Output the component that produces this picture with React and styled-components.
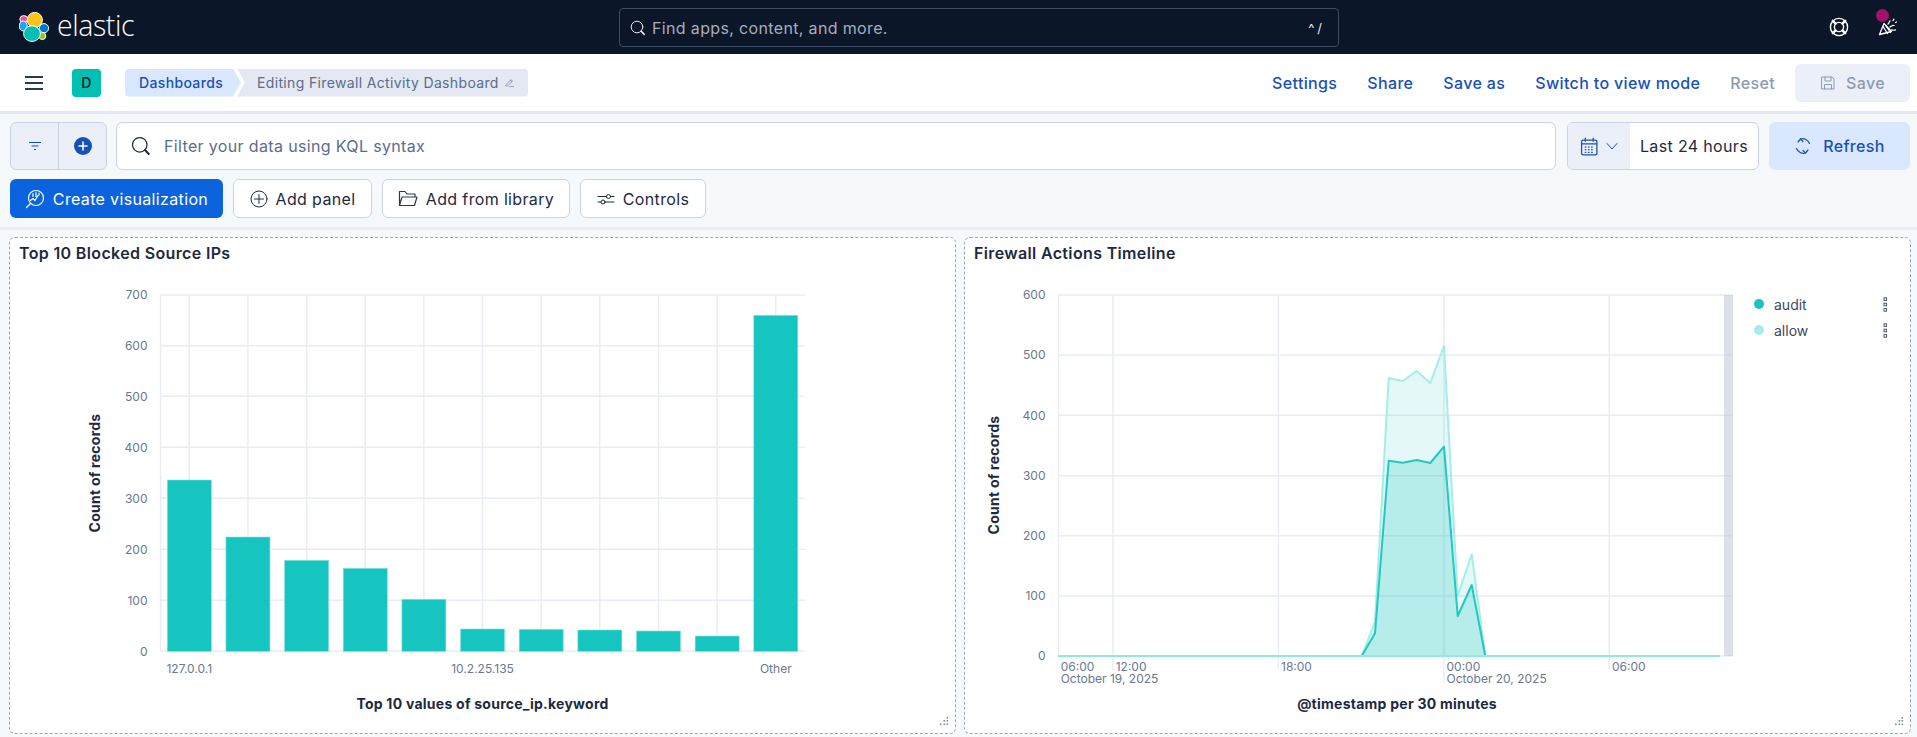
import React from 'react';
import styled, { createGlobalStyle } from 'styled-components';

const Global = createGlobalStyle`
  html, body { margin: 0; padding: 0; height: 100%; }
  body { background: #f6f9fc; font-family: Inter, "Liberation Sans", sans-serif; letter-spacing: 0.35px; overflow: hidden; }
  * { box-sizing: border-box; }
`;

const Page = styled.div`width: 1917px; height: 737px; display: flex; flex-direction: column;`;

const TopBar = styled.header`
  height: 54px; background: #0b1628; display: flex; align-items: center; padding-right: 19px;
`;
const Brand = styled.div`width: 619px; padding-left: 19px; display: flex; align-items: center; gap: 8px;`;
const Wordmark = styled.span`
  color: #fff; font-family: "Open Sans", sans-serif; font-weight: 300; font-size: 28.5px; line-height: 1; letter-spacing: -0.4px; margin-top: -3px;
`;
const GlobalSearch = styled.div`
  width: 720px; height: 39px; margin-top: 1px; border: 1px solid #3e4c66; border-radius: 4px; display: flex; align-items: center;
  padding: 0 13px 0 10px; gap: 6px; color: #a6afbd; font-size: 16px;
`;
const SearchHint = styled.span`flex: 1;`;
const Shortcut = styled.span`color: #e4e8ee; font-size: 13px; letter-spacing: 3px;`;
const TopIcons = styled.div`flex: 1; display: flex; justify-content: flex-end; align-items: center; gap: 29px;`;
const Party = styled.div`position: relative; width: 20px; height: 20px;`;
const Badge = styled.span`
  position: absolute; left: -2px; top: -8px; width: 13px; height: 13px; border-radius: 50%; background: #a3126a;
`;

const SubBar = styled.div`
  height: 60px; background: #fff; border-bottom: 3px solid #e3e8f2; display: flex; align-items: center; padding: 0 7px 0 24px;
`;
const Avatar = styled.div`
  width: 29px; height: 28px; margin-left: 28px; border-radius: 4px; background: #00bfb3; color: #07101f;
  display: flex; align-items: center; justify-content: center; font-size: 14px; font-weight: 500;
`;
const Crumbs = styled.nav`display: flex; margin-left: 24px; height: 28px;`;
const CrumbLink = styled.span`
  background: #d9e8ff; color: #1750ba; font-size: 14px; font-weight: 500; display: flex; align-items: center;
  padding: 0 20px 0 14px; width: 116px; border-radius: 4px 0 0 4px;
  clip-path: polygon(0 0, calc(100% - 8px) 0, 100% 50%, calc(100% - 8px) 100%, 0 100%);
`;
const CrumbCurrent = styled.span`
  background: #e3e8f2; color: #5a6d8c; font-size: 14px; display: flex; align-items: center; gap: 6px; margin-left: -4px;
  padding: 0 14px 0 20px; width: 291px; border-radius: 0 4px 4px 0; white-space: nowrap;
  clip-path: polygon(0 0, 100% 0, 100% 100%, 0 100%, 8px 50%);
`;
const MenuLinks = styled.div`margin-left: auto; display: flex; align-items: center; gap: 30px;`;
const MenuLink = styled.span`
  font-size: 16px; font-weight: 500; color: ${p => (p.$off ? '#8c9ab3' : '#1750ba')}; white-space: nowrap;
`;
const SaveButton = styled.div`
  width: 115px; height: 38px; margin-left: -10px; border-radius: 6px; background: #ebf0f8; color: #8c9ab3; display: flex; align-items: center; justify-content: center;
  gap: 10px; font-size: 16px; font-weight: 500;
`;

const QuerySection = styled.section`
  height: 116px; border-bottom: 3px solid #e9edf4; padding: 8px 7px 0 10px; display: flex; flex-direction: column; gap: 9px;
`;
const QueryRow = styled.div`display: flex; height: 48px;`;
const FilterGroup = styled.div`
  width: 97px; background: #ebf0f8; border: 1px solid #cad3e2; border-radius: 6px; display: flex;
`;
const FilterCell = styled.div`
  flex: ${p => (p.$first ? '0 0 48px' : 1)}; display: flex; align-items: center; justify-content: center;
  ${p => p.$first && 'border-right: 1px solid #cad3e2;'}
`;
const QueryInput = styled.div`
  flex: 1; margin-left: 9px; background: #fff; border: 1px solid #cad3e2; border-radius: 6px; display: flex; align-items: center;
  padding-left: 14px; gap: 13px; color: #5a6d8c; font-size: 16px;
`;
const DateBox = styled.div`
  width: 192px; margin-left: 11px; background: #fff; border: 1px solid #cad3e2; border-radius: 6px; display: flex; overflow: hidden;
`;
const DateIcons = styled.div`width: 62px; background: #ebf0f8; display: flex; align-items: center; justify-content: center; gap: 7px;`;
const DateLabel = styled.div`flex: 1; display: flex; align-items: center; justify-content: center; font-size: 16px; color: #1d2a3e; white-space: nowrap;`;
const RefreshButton = styled.div`
  width: 141px; margin-left: 10px; background: #d9e8ff; color: #1750ba; border-radius: 6px; display: flex; align-items: center; justify-content: center; gap: 11px;
  font-size: 16px; font-weight: 500;
`;
const ActionRow = styled.div`display: flex; height: 39px; gap: 10px;`;
const ActionButton = styled.div`
  height: 39px; width: ${p => p.$w}px; display: flex; align-items: center; justify-content: center; gap: 8px; border-radius: 6px; font-size: 16px; white-space: nowrap;
  background: ${p => (p.$primary ? '#0b64dd' : '#fff')}; color: ${p => (p.$primary ? '#fff' : '#1d2a3e')};
  ${p => !p.$primary && 'border: 1px solid #cad3e2;'}
`;

const Grid = styled.main`
  flex: 1; display: grid; grid-template-columns: 947px 947px; gap: 8px; padding: 7px 0 3px 9px;
`;
const Panel = styled.article`
  position: relative; background: #fff; border: 1px dashed #98a6bd; border-radius: 6px; display: flex; flex-direction: column; min-height: 0;
`;
const PanelTitle = styled.h2`
  margin: 0; height: 27px; padding: 7px 0 0 9px; font-size: 16px; line-height: 16px; font-weight: 600; color: #1d2a3e;
`;
const PanelBody = styled.div`flex: 1; display: flex; min-height: 0;`;
const PlotSvg = styled.svg`display: block; flex: none;`;
const Tick = styled.text`font: 400 12px Inter, sans-serif; letter-spacing: 0; fill: #69788f;`;
const AxisTitle = styled.text`font: 700 14px Inter, sans-serif; letter-spacing: 0.25px; fill: #1d2a3e;`;
const Legend = styled.ul`list-style: none; margin: 0; padding: 26px 22px 0 9px; flex: 1; display: flex; flex-direction: column;`;
const LegendRow = styled.li`height: 26px; display: flex; align-items: center; gap: 10px; font-size: 14px; letter-spacing: 0; color: #3c4a60;`;
const LegendDot = styled.span`width: 10px; height: 10px; border-radius: 50%; background: ${p => p.$c};`;
const LegendName = styled.span`flex: 1;`;
const Grip = styled.svg`position: absolute; right: 6px; bottom: 7px;`;

const Ic = ({ s = 16, c = 'currentColor', w = 1, children, vb = 16 }) => (
  <svg width={s} height={s} viewBox={`0 0 ${vb} ${vb}`} fill="none" stroke={c} strokeWidth={w} strokeLinecap="round" strokeLinejoin="round">{children}</svg>
);

const Logo = () => (
  <svg width="30" height="30" viewBox="0 0 30 30">
    <g stroke="#fff" strokeWidth="1">
      <ellipse cx="4.8" cy="7.2" rx="4" ry="3.6" fill="#f04e98" />
      <ellipse cx="4.2" cy="14" rx="4" ry="5" fill="#1ba9f5" />
      <ellipse cx="25" cy="16.2" rx="4.6" ry="4.6" fill="#0077cc" />
      <ellipse cx="23.4" cy="24" rx="3.4" ry="3.6" fill="#93c90e" />
      <circle cx="15.8" cy="8" r="7.6" fill="#fec514" />
      <ellipse cx="13" cy="21.6" rx="8.4" ry="7.8" fill="#00bfb3" />
    </g>
  </svg>
);

const SearchIcon = ({ s, c }) => (
  <Ic s={s} c={c}>
    <circle cx="7" cy="7" r="5.8" />
    <path d="M11.2 11.2l3 3.2" strokeWidth="1.6" />
  </Ic>
);

const barTops = [480, 537, 560.3, 568.3, 599.3, 629, 629.3, 630, 631, 636, 315.3];
const barTicks = [[700, 295], [600, 345.7], [500, 396.3], [400, 447.3], [300, 498.3], [200, 549.3], [100, 600.3], [0, 651.3]];
const gridColor = '#e9ecf5';

const BarPlot = () => {
  const xs = barTops.map((_, i) => 189.3 + 58.65 * i);
  return (
    <PlotSvg width="945" height="467" viewBox="10 265 945 467">
      <g stroke={gridColor} strokeWidth="1.4">
        {barTicks.map(([, y]) => <line key={y} x1="160" x2="805" y1={y} y2={y} />)}
        {xs.map(x => <line key={x} x1={x} x2={x} y1="295" y2="651" />)}
        <line x1="160.5" x2="160.5" y1="295" y2="651" />
      </g>
      {barTicks.map(([v, y]) => <Tick key={v} x="147.5" y={y + 4.3} textAnchor="end">{v}</Tick>)}
      {xs.map((x, i) => (
        <rect key={x} x={x - 22} y={barTops[i]} width="44" height={651.3 - barTops[i]} fill="#16c5c0" stroke="#7fe3de" strokeWidth="0.6" />
      ))}
      <Tick x={xs[0]} y="673" textAnchor="middle">127.0.0.1</Tick>
      <Tick x={xs[5]} y="673" textAnchor="middle">10.2.25.135</Tick>
      <Tick x={xs[10]} y="673" textAnchor="middle">Other</Tick>
      <AxisTitle transform="translate(100 473) rotate(-90)" textAnchor="middle">Count of records</AxisTitle>
      <AxisTitle x="482.5" y="709" textAnchor="middle">Top 10 values of source_ip.keyword</AxisTitle>
    </PlotSvg>
  );
};

const px = [1361.7, 1375, 1388.7, 1402.7, 1416.7, 1430.3, 1444, 1457.7, 1471.7, 1485.3];
const audit = [656, 633.3, 460.7, 462.7, 460, 463, 446.7, 616, 585, 656];
const allow = [656, 621.7, 378, 381, 371, 383, 346, 596, 554.3, 656];
const toPts = ys => px.map((x, i) => `${x},${ys[i]}`).join(' ');
const lineTicks = [[600, 295], [500, 355], [400, 415.3], [300, 475.7], [200, 535.7], [100, 596], [0, 656]];
const xGrid = [[1113, 670], [1278.3, 670], [1444, 682], [1609.3, 670]];
const xLabels = [[1060.7, '06:00'], [1115.7, '12:00'], [1281, '18:00'], [1446.5, '00:00'], [1612, '06:00']];

const LinePlot = () => (
  <PlotSvg width="780" height="467" viewBox="965 265 780 467">
    <g stroke={gridColor} strokeWidth="1.4">
      {lineTicks.map(([, y]) => <line key={y} x1="1058" x2="1733" y1={y} y2={y} />)}
      {xGrid.map(([x, b]) => <line key={x} x1={x} x2={x} y1="295" y2={b} />)}
      <line x1="1058.5" x2="1058.5" y1="295" y2="656" />
    </g>
    {lineTicks.map(([v, y]) => <Tick key={v} x="1045.5" y={y + 4.3} textAnchor="end">{v}</Tick>)}
    <rect x="1724" y="295" width="9" height="361" fill="#b9bfd0" fillOpacity="0.48" />
    <polygon points={toPts(allow)} fill="#16c5c0" fillOpacity="0.12" />
    <polygon points={toPts(audit)} fill="#16c5c0" fillOpacity="0.22" />
    <polyline points={toPts(allow)} fill="none" stroke="#a6ede8" strokeWidth="2" strokeLinejoin="round" />
    <polyline points={toPts(audit)} fill="none" stroke="#22c8c1" strokeWidth="2" strokeLinejoin="round" />
    <line x1="1058" x2="1720" y1="656" y2="656" stroke="#8fe8e2" strokeWidth="2" />
    {xLabels.map(([x, t]) => <Tick key={x} x={x} y="671">{t}</Tick>)}
    <Tick x="1060.7" y="683">October 19, 2025</Tick>
    <Tick x="1446.5" y="683">October 20, 2025</Tick>
    <AxisTitle transform="translate(999 475) rotate(-90)" textAnchor="middle">Count of records</AxisTitle>
    <AxisTitle x="1397" y="709" textAnchor="middle">@timestamp per 30 minutes</AxisTitle>
  </PlotSvg>
);

const Boxes = () => (
  <svg width="5" height="15" viewBox="0 0 5 15" fill="none" stroke="#3c4a60" strokeWidth="0.9">
    <rect x="1" y="0.8" width="2.6" height="2.6" /><rect x="1" y="6.2" width="2.6" height="2.6" /><rect x="1" y="11.6" width="2.6" height="2.6" />
  </svg>
);

const ResizeGrip = () => (
  <Grip width="10" height="9" viewBox="0 0 10 9" fill="#7f8ea6">
    <rect x="7.5" y="0" width="1.6" height="1.6" /><rect x="4.5" y="3" width="1.6" height="1.6" /><rect x="7.5" y="3" width="1.6" height="1.6" />
    <rect x="1" y="6.5" width="1.6" height="1.6" /><rect x="4.5" y="6.5" width="1.6" height="1.6" /><rect x="7.5" y="6.5" width="1.6" height="1.6" />
  </Grip>
);

export default function App() {
  return (
    <Page>
      <Global />
      <TopBar>
        <Brand><Logo /><Wordmark>elastic</Wordmark></Brand>
        <GlobalSearch>
          <SearchIcon s={16} c="#e4e8ee" />
          <SearchHint>Find apps, content, and more.</SearchHint>
          <Shortcut>^/</Shortcut>
        </GlobalSearch>
        <TopIcons>
          <Ic s={20} c="#fff" vb={20} w={1.4}>
            <circle cx="10" cy="10" r="8.6" /><circle cx="10" cy="10" r="4.6" />
            <path d="M6.6 6.6L3.8 3.8M13.4 6.6l2.8-2.8M6.6 13.4l-2.8 2.8M13.4 13.4l2.8 2.8" strokeWidth="2.4" />
          </Ic>
          <Party>
            <Ic s={20} c="#fff" vb={20} w={1.3}>
              <path d="M1.5 17.5L6 6.5l7.5 8z" />
              <path d="M5 9.5l4.5 7M8 9l4.5 6.5" />
              <path d="M10 7c1-1 1-2 2-3M12 10c1.5-1 3-2 4-1.500M13.500 13c1.500 0 3 .5 4 0M15 3.500l1-1.500M17.500 5.500l1-.5" strokeDasharray="1.600 1.200" />
            </Ic>
            <Badge />
          </Party>
        </TopIcons>
      </TopBar>

      <SubBar>
        <Ic s={20} c="#2a3a55" vb={20} w={2}><path d="M1 4h18M1 10h18M1 16h18" strokeLinecap="butt" /></Ic>
        <Avatar>D</Avatar>
        <Crumbs>
          <CrumbLink>Dashboards</CrumbLink>
          <CrumbCurrent>
            Editing Firewall Activity Dashboard
            <Ic s={13} c="#5a6d8c" vb={16}><path d="M2 11.500L10.500 3 13 5.500 4.500 14H2zM9 4.500l2.500 2.500M8 15h7" /></Ic>
          </CrumbCurrent>
        </Crumbs>
        <MenuLinks>
          <MenuLink>Settings</MenuLink>
          <MenuLink>Share</MenuLink>
          <MenuLink>Save as</MenuLink>
          <MenuLink>Switch to view mode</MenuLink>
          <MenuLink $off>Reset</MenuLink>
          <SaveButton>
            <Ic s={16} c="#8c9ab3"><path d="M2 2h10l2 2v10H2zM5 2v4h6V2M4.500 14V9.500h7V14" /></Ic>
            Save
          </SaveButton>
        </MenuLinks>
      </SubBar>

      <QuerySection>
        <QueryRow>
          <FilterGroup>
            <FilterCell $first>
              <Ic s={14} c="#1750ba" vb={14} w={1.2}><path d="M1 3.500h12M3.500 7h7M6 10.500h2" strokeLinecap="butt" /></Ic>
            </FilterCell>
            <FilterCell>
              <svg width="18" height="18" viewBox="0 0 18 18"><circle cx="9" cy="9" r="9" fill="#1750ba" /><path d="M9 4.500v9M4.500 9h9" stroke="#fff" strokeWidth="1.600" /></svg>
            </FilterCell>
          </FilterGroup>
          <QueryInput>
            <SearchIcon s={20} c="#1d2a3e" />
            Filter your data using KQL syntax
          </QueryInput>
          <DateBox>
            <DateIcons>
              <Ic s={19} c="#1750ba" vb={18} w={1.2}>
                <rect x="1.500" y="3" width="14.500" height="14" rx="1.500" /><path d="M1.500 6.500h14.500M5 1v3M12.500 1v3" />
                <path d="M4.500 9.500h9M4.500 12h9M4.500 14.500h9" strokeDasharray="1.500 1.500" strokeLinecap="butt" />
              </Ic>
              <Ic s={12} c="#1750ba" vb={12}><path d="M1 3.500l5 5.500 5-5.500" /></Ic>
            </DateIcons>
            <DateLabel>Last 24 hours</DateLabel>
          </DateBox>
          <RefreshButton>
            <Ic s={18} c="#1750ba" vb={18} w={1.2}>
              <path d="M15.500 6.500A7.500 7.500 0 0 0 6.500 2M2.500 11.500a7.500 7.500 0 0 0 9 4.500" />
              <path d="M4 5l2.500-3L9 4.500M14 13l-2.500 3L9 13.500" />
            </Ic>
            Refresh
          </RefreshButton>
        </QueryRow>
        <ActionRow>
          <ActionButton $primary $w={213}>
            <Ic s={20} c="#fff" vb={20} w={1.200}>
              <circle cx="11" cy="9" r="7.500" /><path d="M5.500 14.500L1.500 18.500" />
              <path d="M5.500 11.500l2.500-2 2 2 3-5M8 4.500v3M11 3.500v4M14 4v2" />
            </Ic>
            Create visualization
          </ActionButton>
          <ActionButton $w={139}>
            <Ic s={18} c="#1d2a3e" vb={18}><circle cx="9" cy="9" r="8" /><path d="M9 4.500v9M4.500 9h9" /></Ic>
            Add panel
          </ActionButton>
          <ActionButton $w={188}>
            <Ic s={20} c="#2a3a55" vb={20} w={1.200}><path d="M1.500 16.500V2.500h5.500l2 2.500h8v3M1.500 16.500l2.500-8.500h15l-2.500 8.500z" /></Ic>
            Add from library
          </ActionButton>
          <ActionButton $w={126}>
            <Ic s={18} c="#1d2a3e" vb={18}>
              <path d="M1 6.500h8.500M13.500 6.500H17M1 12h3M8 12h9" /><circle cx="11.500" cy="6.500" r="2" /><circle cx="6" cy="12" r="2" />
            </Ic>
            Controls
          </ActionButton>
        </ActionRow>
      </QuerySection>

      <Grid>
        <Panel>
          <PanelTitle>Top 10 Blocked Source IPs</PanelTitle>
          <PanelBody><BarPlot /></PanelBody>
          <ResizeGrip />
        </Panel>
        <Panel>
          <PanelTitle>Firewall Actions Timeline</PanelTitle>
          <PanelBody>
            <LinePlot />
            <Legend>
              <LegendRow><LegendDot $c="#16c5c0" /><LegendName>audit</LegendName><Boxes /></LegendRow>
              <LegendRow><LegendDot $c="#a6ede8" /><LegendName>allow</LegendName><Boxes /></LegendRow>
            </Legend>
          </PanelBody>
          <ResizeGrip />
        </Panel>
      </Grid>
    </Page>
  );
}
